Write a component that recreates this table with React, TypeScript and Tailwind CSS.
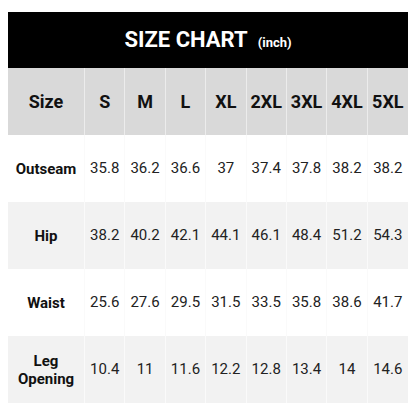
const sizes = ["S", "M", "L", "XL", "2XL", "3XL", "4XL", "5XL"];

const rows: { label: string[]; values: string[] }[] = [
  { label: ["Outseam"], values: ["35.8", "36.2", "36.6", "37", "37.4", "37.8", "38.2", "38.2"] },
  { label: ["Hip"], values: ["38.2", "40.2", "42.1", "44.1", "46.1", "48.4", "51.2", "54.3"] },
  { label: ["Waist"], values: ["25.6", "27.6", "29.5", "31.5", "33.5", "35.8", "38.6", "41.7"] },
  { label: ["Leg", "Opening"], values: ["10.4", "11", "11.6", "12.2", "12.8", "13.4", "14", "14.6"] },
];

export default function App() {
  return (
    <div className="w-[416px] h-[416px] bg-white pt-3 px-2 font-['Roboto',sans-serif]">
      <div className="w-[400px]">
        <div className="h-[56px] bg-black flex items-center justify-center gap-2.5 text-white font-bold">
          <span className="text-[22px] leading-none">SIZE CHART</span>
          <span className="text-[13px] leading-none mt-1">(inch)</span>
        </div>

        <div className="grid grid-cols-[77px_repeat(8,1fr)] h-[67px] bg-[#d9d9d9] text-[18px] font-bold text-[#111]">
          <div className="flex items-center justify-center border-r border-[#ececec]">Size</div>
          {sizes.map((s, i) => (
            <div
              key={s}
              className={`flex items-center justify-center ${i < sizes.length - 1 ? "border-r border-[#ececec]" : ""}`}
            >
              {s}
            </div>
          ))}
        </div>

        {rows.map((row, r) => (
          <div
            key={row.label.join(" ")}
            className={`grid grid-cols-[77px_repeat(8,1fr)] h-[67px] text-[15px] text-[#222] ${
              r % 2 === 1 ? "bg-[#f2f2f2]" : "bg-white"
            }`}
          >
            <div className="flex flex-col items-center justify-center font-bold text-[#111] leading-[18px] border-r border-[#fafafa]">
              {row.label.map((l) => (
                <span key={l}>{l}</span>
              ))}
            </div>
            {row.values.map((v, i) => (
              <div
                key={i}
                className={`flex items-center justify-center ${i < row.values.length - 1 ? "border-r border-[#fafafa]" : ""}`}
              >
                {v}
              </div>
            ))}
          </div>
        ))}
      </div>
    </div>
  );
}
